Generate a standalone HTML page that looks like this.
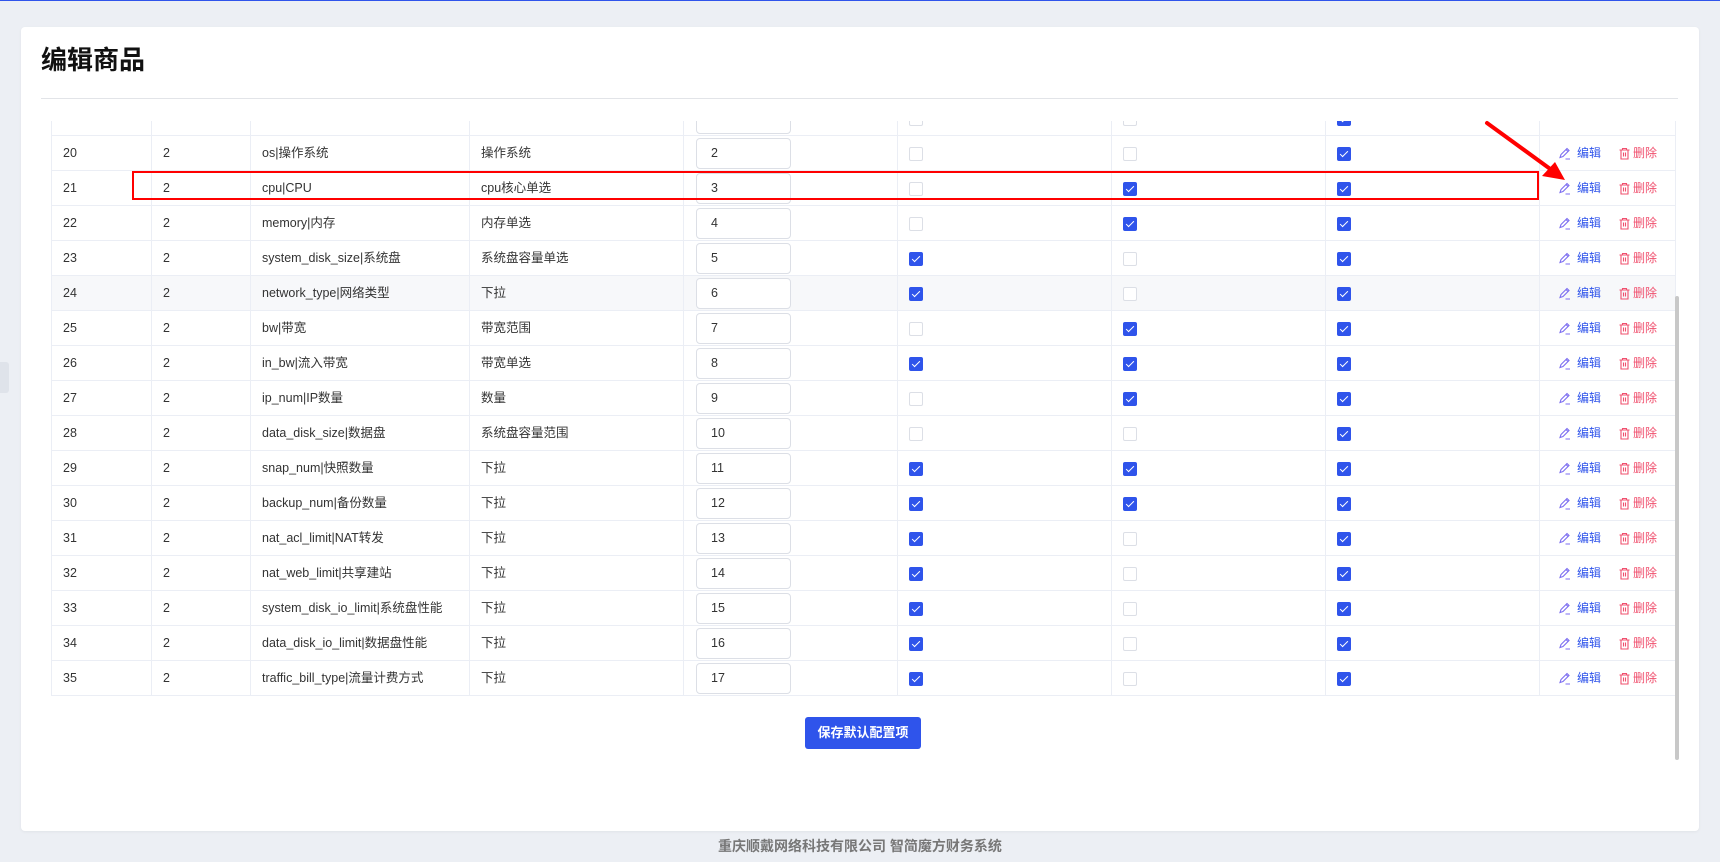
<!DOCTYPE html>
<html><head><meta charset="utf-8"><style>
*{margin:0;padding:0;box-sizing:border-box}
body{width:1720px;height:862px;background:#eceff4;position:relative;overflow:hidden;font-family:"Liberation Sans","Noto Sans CJK SC",sans-serif;color:#333}
.top{position:absolute;left:0;top:0;width:1720px;height:1px;background:#2f54eb}
.card{position:absolute;left:21px;top:27px;width:1678px;height:804px;background:#fff;border-radius:4px;box-shadow:0 1px 3px rgba(0,0,0,.05)}
.title{position:absolute;left:41px;top:45px;font-size:26px;font-weight:bold;color:#111;line-height:30px}
.hr{position:absolute;left:41px;top:98px;width:1637px;height:1px;background:#e2e4e8}
.wrap{position:absolute;left:51px;top:121px;width:1625px;height:576px;overflow:hidden}
.row{position:absolute;left:0;width:1624px;height:35px;border-bottom:1px solid #ebeef5}
.row.h{background:#f7f8fa}
.c{position:absolute;top:0;height:35px;border-left:1px solid #ebeef5;font-size:12.5px;line-height:34px;padding-left:11px;white-space:nowrap}
.inp{position:absolute;left:12px;top:2px;width:95px;height:31px;border:1px solid #dcdfe6;border-radius:4px;background:#fff;padding-left:14px;line-height:29px;font-size:12.5px}
.cb{position:absolute;left:11px;top:11px;width:14px;height:14px;border:1px solid #dcdfe6;border-radius:2px;background:#fff}
.cb.on{background:#2f54eb;border-color:#2f54eb}
.cb.on:after{content:"";position:absolute;left:4px;top:1px;width:3px;height:7px;border:solid #fff;border-width:0 1.5px 1.5px 0;transform:rotate(45deg)}
.act{font-size:12px}
.ed{position:absolute;left:37px;color:#2f54eb}
.de{position:absolute;left:93px;color:#f0506e}
.ie{position:absolute;left:18px;top:11px}
.id{position:absolute;left:78px;top:11px}
.btn{position:absolute;left:805px;top:717px;width:116px;height:32px;background:#2f54eb;color:#fff;border-radius:3px;font-size:13px;font-weight:bold;text-align:center;line-height:32px}
.foot{position:absolute;left:0;width:1720px;top:836px;text-align:center;font-size:14px;font-weight:bold;color:#777;line-height:20px}
.sb{position:absolute;left:1675px;top:296px;width:4px;height:464px;background:#c8c8c8;border-radius:2px}
.tab{position:absolute;left:0;top:362px;width:9px;height:31px;background:#dfe3ea;border-radius:0 3px 3px 0}
.red{position:absolute;left:132px;top:171px;width:1407px;height:29px;border:2px solid #f00}
</style></head><body>
<div class="top"></div>
<div class="tab"></div>
<div class="card"></div>
<div class="title">编辑商品</div>
<div class="hr"></div>
<div class="wrap" id="w"></div>
<div class="sb"></div>
<div class="red"></div>
<svg style="position:absolute;left:0;top:0" width="1720" height="862"><line x1="1487" y1="123" x2="1553" y2="171" stroke="#f00" stroke-width="4" stroke-linecap="round"/><polygon points="1565,180 1542,176 1555,162" fill="#f00"/></svg>
<div class="btn">保存默认配置项</div>
<div class="foot">重庆顺戴网络科技有限公司 智简魔方财务系统</div>
<script>
var d=[[19,"","","",1,0,0,1],[20,"os|操作系统","操作系统",2,0,0,1],[21,"cpu|CPU","cpu核心单选",3,0,1,1],[22,"memory|内存","内存单选",4,0,1,1],[23,"system_disk_size|系统盘","系统盘容量单选",5,1,0,1],[24,"network_type|网络类型","下拉",6,1,0,1],[25,"bw|带宽","带宽范围",7,0,1,1],[26,"in_bw|流入带宽","带宽单选",8,1,1,1],[27,"ip_num|IP数量","数量",9,0,1,1],[28,"data_disk_size|数据盘","系统盘容量范围",10,0,0,1],[29,"snap_num|快照数量","下拉",11,1,1,1],[30,"backup_num|备份数量","下拉",12,1,1,1],[31,"nat_acl_limit|NAT转发","下拉",13,1,0,1],[32,"nat_web_limit|共享建站","下拉",14,1,0,1],[33,"system_disk_io_limit|系统盘性能","下拉",15,1,0,1],[34,"data_disk_io_limit|数据盘性能","下拉",16,1,0,1],[35,"traffic_bill_type|流量计费方式","下拉",17,1,0,1]];
var x=[0,100,199,418,632,846,1060,1274,1488,1624];
var pen='<svg class="ie" width="13" height="13" viewBox="0 0 13 13" fill="none" stroke="#7b6cf0" stroke-width="1.1"><path d="M2 10.5 L3 7.5 L9 1.5 L11 3.5 L5 9.5 Z M8 2.5 L10 4.5 M7.5 12 H12"/></svg>';
var bin='<svg class="id" width="13" height="13" viewBox="0 0 13 13" fill="none" stroke="#f0506e" stroke-width="1.1"><path d="M1.5 3 H11.5 M4.5 3 V1.5 H8.5 V3 M3 3 V12 H10 V3 M5.5 5.5 V9.5 M7.5 5.5 V9.5"/></svg>';
var h='';
d.forEach(function(r,i){
 var top=i==0?-20:15+(i-1)*35;
 h+='<div class="row'+(r[0]==24?' h':'')+'" style="top:'+top+'px">';
 var cells=[r[0]==19?'':r[0],r[0]==19?'':2,r[1],r[2],'<div class="inp">'+r[3]+'</div>',
 '<div class="cb'+(r[4]?' on':'')+'"></div>','<div class="cb'+(r[5]?' on':'')+'"></div>','<div class="cb'+(r[6]?' on':'')+'"></div>',
 r[0]==19?'':pen+'<span class="ed">编辑</span>'+bin+'<span class="de">删除</span>'];
 if(r[0]==19){cells[5]='<div class="cb"></div>';cells[6]='<div class="cb"></div>';cells[7]='<div class="cb on"></div>';}
 cells.forEach(function(c,j){h+='<div class="c'+(j==8?' act':'')+'" style="left:'+x[j]+'px;width:'+(x[j+1]-x[j])+'px'+(j==0?';border-left:1px solid #ebeef5':'')+'">'+c+'</div>';});
 h+='<div class="c" style="left:1624px;width:1px;padding:0"></div></div>';
});
document.getElementById('w').innerHTML=h;
</script>
</body></html>
